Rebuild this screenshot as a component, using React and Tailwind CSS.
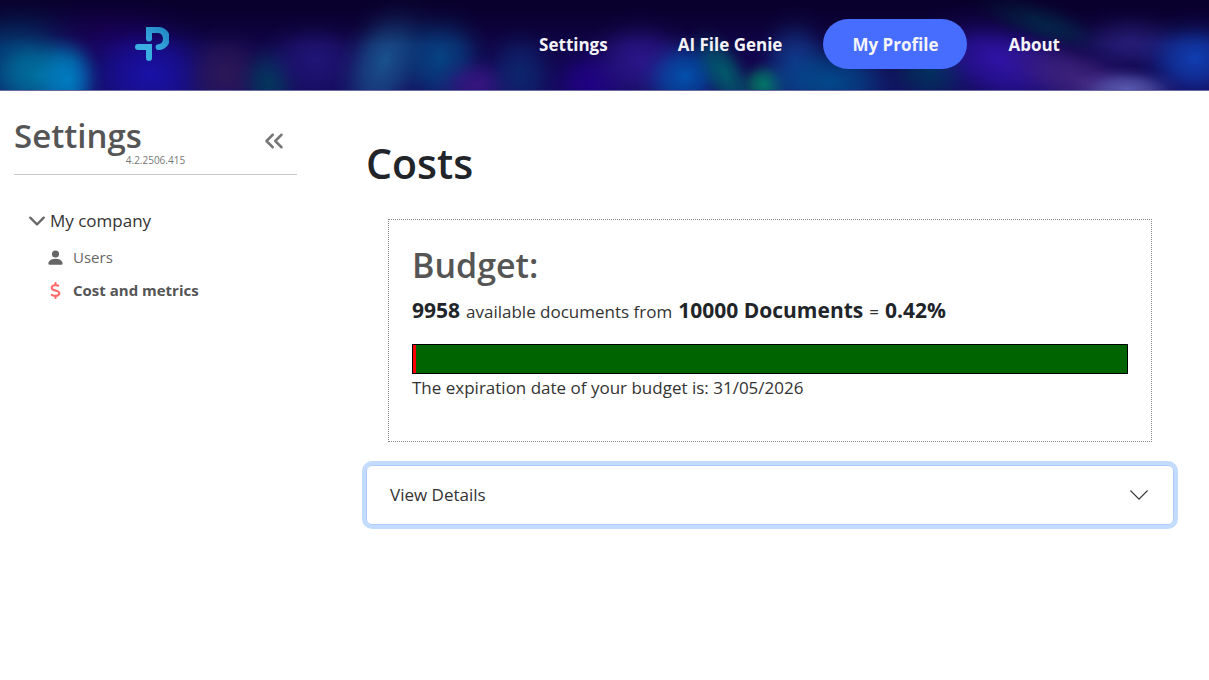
import { ChevronsLeft } from 'lucide-react'
import { BsChevronDown, BsPersonFill } from 'react-icons/bs'
import { FaDollarSign } from 'react-icons/fa6'

const NAV = [
  { label: 'Settings' },
  { label: 'AI File Genie' },
  { label: 'My Profile', active: true },
  { label: 'About' },
]

const BUDGET = { available: 9958, total: 10000, expires: '31/05/2026' }

// soft coloured lights behind the nav: [cx, cy, rx, ry, colour, rotation]
const LIGHTS = [
  [20, 60, 100, 75, '#004a80', 0],
  [110, 30, 90, 50, '#1c0060', 0],
  [40, 75, 60, 42, '#0078a4', 0],
  [68, 80, 36, 46, '#0080c8', 0],
  [150, 74, 80, 60, '#1a12b0', 0],
  [225, 74, 50, 50, '#2e1a58', 0],
  [270, 82, 34, 42, '#003c5c', 0],
  [315, 60, 60, 46, '#22167a', 0],
  [385, 60, 46, 80, '#1a5a95', 22],
  [440, 58, 52, 60, '#054a8a', 0],
  [478, 85, 46, 30, '#3a1584', 0],
  [520, 74, 40, 50, '#0c2870', 0],
  [590, 84, 44, 40, '#200088', 0],
  [640, 60, 60, 50, '#2e1790', 0],
  [685, 76, 50, 42, '#0058b4', -20],
  [725, 74, 26, 56, '#00606c', -30],
  [765, 84, 28, 24, '#008a60', 0],
  [795, 60, 40, 56, '#12388a', 0],
  [830, 82, 80, 44, '#005090', 0],
  [930, 70, 50, 44, '#003560', 0],
  [1000, 60, 90, 52, '#3214b0', 20],
  [1035, 18, 80, 24, '#00405c', 20],
  [1080, 80, 90, 36, '#442680', 20],
  [1130, 40, 60, 34, '#2b2180', 0],
  [1128, 90, 56, 24, '#5e62b8', 0],
  [1195, 58, 60, 48, '#1044bc', 0],
]

function HeaderBackdrop() {
  return (
    <svg
      className="absolute inset-0 h-full w-full"
      viewBox="0 0 1209 90"
      preserveAspectRatio="none"
      aria-hidden="true"
    >
      <defs>
        <linearGradient id="night" x1="0" y1="0" x2="0" y2="1">
          <stop offset="0" stopColor="#0c0034" />
          <stop offset="1" stopColor="#140a5c" />
        </linearGradient>
        <linearGradient id="dusk" x1="0" y1="0" x2="0" y2="1">
          <stop offset="0" stopColor="#08002a" stopOpacity="0.8" />
          <stop offset="0.5" stopColor="#08002a" stopOpacity="0" />
        </linearGradient>
        {LIGHTS.map(([, , , , color], i) => (
          <radialGradient key={i} id={`light-${i}`}>
            <stop offset="0" stopColor={color} stopOpacity="0.9" />
            <stop offset="0.4" stopColor={color} stopOpacity="0.6" />
            <stop offset="0.75" stopColor={color} stopOpacity="0.15" />
            <stop offset="1" stopColor={color} stopOpacity="0" />
          </radialGradient>
        ))}
      </defs>
      <rect width="1209" height="90" fill="url(#night)" />
      {LIGHTS.map(([cx, cy, rx, ry, , angle], i) => (
        <ellipse
          key={i}
          cx={cx}
          cy={cy}
          rx={rx}
          ry={ry}
          fill={`url(#light-${i})`}
          transform={`rotate(${angle} ${cx} ${cy})`}
        />
      ))}
      <rect width="1209" height="90" fill="url(#dusk)" />
    </svg>
  )
}

function Logo() {
  return (
    <svg viewBox="0 0 34 34" className="h-[34px] w-[34px]" aria-hidden="true">
      <defs>
        <linearGradient id="brand" x1="1" y1="0" x2="0" y2="1">
          <stop offset="0" stopColor="#1f7fc0" />
          <stop offset="1" stopColor="#3db4e6" />
        </linearGradient>
      </defs>
      <path
        d="M11 0H23A11.500 11.500 0 0 1 24 23A2.800 2.800 0 0 1 23 17.300A5.700 5.700 0 0 0 23 6H17V11.500A3 3 0 0 1 11 11.500Z"
        fill="url(#brand)"
      />
      <path d="M3 17H17V31A3 3 0 0 1 11 31V23H3A3 3 0 0 1 3 17Z" fill="#3aaee0" />
    </svg>
  )
}

function Header() {
  return (
    <header className="relative border-b border-[#6a6a9c] bg-[#0b0237]">
      <HeaderBackdrop />
      <div className="relative flex h-[90px] items-center justify-between px-[120px] pb-0.5">
        <a href="#home" aria-label="Home" className="px-[15px]">
          <Logo />
        </a>
        <nav className="flex gap-3">
          {NAV.map((item) => (
            <a
              key={item.label}
              href="#nav"
              className={`flex h-[50px] items-center rounded-full px-[29px] pt-0.5 text-[17px] font-bold whitespace-nowrap text-[#f4f4f8] ${
                item.active ? 'bg-[#476dff]' : ''
              }`}
            >
              {item.label}
            </a>
          ))}
        </nav>
      </div>
    </header>
  )
}

function Sidebar() {
  return (
    <aside className="w-[311px] shrink-0 px-3.5 pt-[17px]">
      <div className="flex items-center justify-between border-b border-[#c8c8c8] pb-1.5">
        <div className="flex items-end">
          <h2 className="pb-1 text-[33px] leading-[56px] font-semibold text-[#555]">Settings</h2>
          <small className="-ml-4 text-[10px] leading-4 text-[#777]">4.2.2506.415</small>
        </div>
        <button type="button" aria-label="Collapse menu" className="mr-2 pt-1.5 text-[#777]">
          <ChevronsLeft size={30} strokeWidth={2} />
        </button>
      </div>

      <button type="button" className="mt-8 ml-3.5 flex items-center gap-1 text-[17px] leading-7 text-[#333]">
        <BsChevronDown size={18} strokeWidth={1} className="text-[#666]" />
        My company
      </button>
      <ul className="mt-1.5 ml-8 text-[15px] text-[#666]">
        <li>
          <a href="#users" className="flex h-[33px] items-center gap-2">
            <BsPersonFill size={19} />
            Users
          </a>
        </li>
        <li>
          <a href="#costs" className="flex h-[33px] items-center gap-2 font-bold text-[#555]">
            <FaDollarSign size={17} className="w-[19px] text-[#ff6b6b]" />
            Cost and metrics
          </a>
        </li>
      </ul>
    </aside>
  )
}

function Budget() {
  const used = ((BUDGET.total - BUDGET.available) / BUDGET.total) * 100
  return (
    <section className="mx-[22px] mt-6 border border-dotted border-[#888] px-[23px] pt-5 pb-[39px]">
      <h2 className="text-[34px] leading-[50px] font-semibold text-[#555]">Budget:</h2>
      <p className="flex flex-wrap items-baseline gap-x-1.5 text-[17px] leading-10 text-[#333]">
        <b className="text-[21px] text-[#212529]">{BUDGET.available}</b>
        <span>available documents from</span>
        <b className="text-[21px] text-[#212529]">{BUDGET.total} Documents</b>
        <span>=</span>
        <b className="text-[21px] text-[#212529]">{used.toFixed(2)}%</b>
      </p>
      <div className="mt-3 h-[30px] border border-black bg-[#006400]">
        <div className="h-full bg-[#ff0000]" style={{ width: `${used}%` }} />
      </div>
      <p className="text-[17px] leading-7 text-[#333]">
        The expiration date of your budget is: {BUDGET.expires}
      </p>
    </section>
  )
}

export default function App() {
  return (
    <div className="min-h-screen bg-white font-['Open_Sans',sans-serif] text-[#212529]">
      <Header />
      <div className="flex">
        <Sidebar />
        <main className="min-w-0 flex-1 pt-[42px] pr-[35px] pl-[55px]">
          <h1 className="pb-0.5 text-[41px] leading-[60px] font-semibold">Costs</h1>
          <Budget />
          <button
            type="button"
            aria-expanded="false"
            className="mt-[23px] flex h-[60px] w-full items-center justify-between rounded-md border border-[#b0cbf8] px-[23px] text-[17px] text-[#333] ring-4 ring-[#c2dbff]"
          >
            View Details
            <BsChevronDown size={22} />
          </button>
        </main>
      </div>
    </div>
  )
}
